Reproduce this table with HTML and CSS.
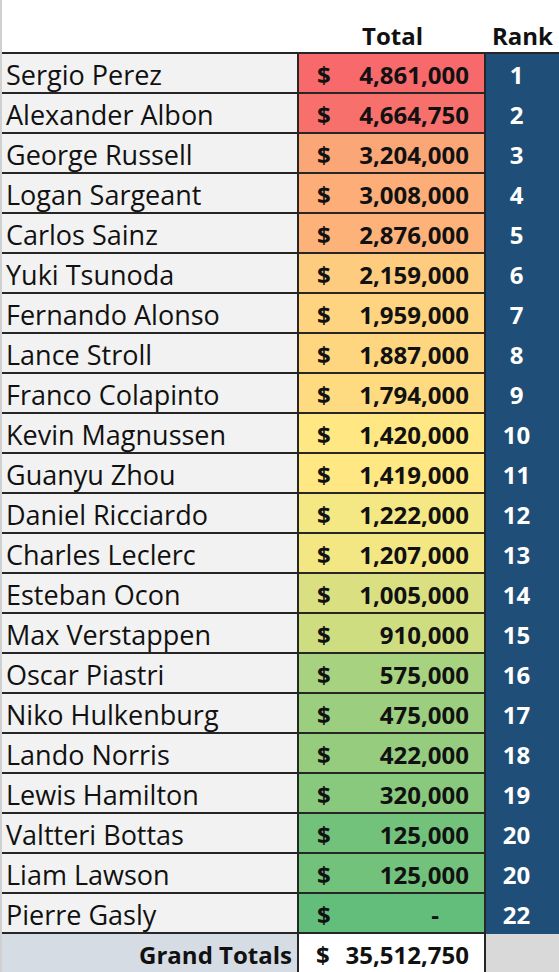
FILE: index.html
```html
<!DOCTYPE html>
<html>
<head>
<meta charset="utf-8">
<link rel="stylesheet" href="styles.css">
</head>
<body>
<div class="sheet">
  <div class="row head">
    <div class="c name"></div>
    <div class="c total">Total</div>
    <div class="c rank">Rank</div>
  </div>
  <div class="row"><div class="c name">Sergio Perez</div><div class="c total" style="background:#f8696b"><span>$</span><span>4,861,000</span></div><div class="c rank">1</div></div>
  <div class="row"><div class="c name">Alexander Albon</div><div class="c total" style="background:#f8706c"><span>$</span><span>4,664,750</span></div><div class="c rank">2</div></div>
  <div class="row"><div class="c name">George Russell</div><div class="c total" style="background:#fba677"><span>$</span><span>3,204,000</span></div><div class="c rank">3</div></div>
  <div class="row"><div class="c name">Logan Sargeant</div><div class="c total" style="background:#fcad78"><span>$</span><span>3,008,000</span></div><div class="c rank">4</div></div>
  <div class="row"><div class="c name">Carlos Sainz</div><div class="c total" style="background:#fcb279"><span>$</span><span>2,876,000</span></div><div class="c rank">5</div></div>
  <div class="row"><div class="c name">Yuki Tsunoda</div><div class="c total" style="background:#fdcc7e"><span>$</span><span>2,159,000</span></div><div class="c rank">6</div></div>
  <div class="row"><div class="c name">Fernando Alonso</div><div class="c total" style="background:#fed480"><span>$</span><span>1,959,000</span></div><div class="c rank">7</div></div>
  <div class="row"><div class="c name">Lance Stroll</div><div class="c total" style="background:#fed680"><span>$</span><span>1,887,000</span></div><div class="c rank">8</div></div>
  <div class="row"><div class="c name">Franco Colapinto</div><div class="c total" style="background:#feda81"><span>$</span><span>1,794,000</span></div><div class="c rank">9</div></div>
  <div class="row"><div class="c name">Kevin Magnussen</div><div class="c total" style="background:#ffe783"><span>$</span><span>1,420,000</span></div><div class="c rank">10</div></div>
  <div class="row"><div class="c name">Guanyu Zhou</div><div class="c total" style="background:#ffe783"><span>$</span><span>1,419,000</span></div><div class="c rank">11</div></div>
  <div class="row"><div class="c name">Daniel Ricciardo</div><div class="c total" style="background:#f3e883"><span>$</span><span>1,222,000</span></div><div class="c rank">12</div></div>
  <div class="row"><div class="c name">Charles Leclerc</div><div class="c total" style="background:#f2e783"><span>$</span><span>1,207,000</span></div><div class="c rank">13</div></div>
  <div class="row"><div class="c name">Esteban Ocon</div><div class="c total" style="background:#dae082"><span>$</span><span>1,005,000</span></div><div class="c rank">14</div></div>
  <div class="row"><div class="c name">Max Verstappen</div><div class="c total" style="background:#cfdd81"><span>$</span><span>910,000</span></div><div class="c rank">15</div></div>
  <div class="row"><div class="c name">Oscar Piastri</div><div class="c total" style="background:#a7d27f"><span>$</span><span>575,000</span></div><div class="c rank">16</div></div>
  <div class="row"><div class="c name">Niko Hulkenburg</div><div class="c total" style="background:#9bce7e"><span>$</span><span>475,000</span></div><div class="c rank">17</div></div>
  <div class="row"><div class="c name">Lando Norris</div><div class="c total" style="background:#95cc7e"><span>$</span><span>422,000</span></div><div class="c rank">18</div></div>
  <div class="row"><div class="c name">Lewis Hamilton</div><div class="c total" style="background:#89c97d"><span>$</span><span>320,000</span></div><div class="c rank">19</div></div>
  <div class="row"><div class="c name">Valtteri Bottas</div><div class="c total" style="background:#72c27c"><span>$</span><span>125,000</span></div><div class="c rank">20</div></div>
  <div class="row"><div class="c name">Liam Lawson</div><div class="c total" style="background:#72c27c"><span>$</span><span>125,000</span></div><div class="c rank">20</div></div>
  <div class="row"><div class="c name">Pierre Gasly</div><div class="c total" style="background:#63be7b"><span>$</span><span class="dash">-</span></div><div class="c rank">22</div></div>
  <div class="row grand">
    <div class="c name">Grand Totals</div>
    <div class="c total"><span>$</span><span>35,512,750</span></div>
    <div class="c rank"></div>
  </div>
</div>
</body>
</html>
```

FILE: styles.css
```css
html, body {
  margin: 0;
  padding: 0;
  background: #ffffff;
}

body {
  font-family: "Open Sans", "Noto Sans", sans-serif;
  color: #111111;
  overflow: hidden;
}

.sheet {
  width: 557px;
  border-left: 2px solid #d0d0d0;
}

.row {
  display: grid;
  grid-template-columns: 297px 187px 73px;
  height: 40px;
}

.c {
  box-sizing: border-box;
  border-bottom: 2px solid #262626;
  white-space: nowrap;
  overflow: hidden;
}

.name {
  background: #f2f2f2;
  border-right: 2px solid #262626;
  font-size: 27px;
  line-height: 35px;
  padding: 3px 0 0 4px;
}

.total {
  display: flex;
  justify-content: space-between;
  border-right: 2px solid #262626;
  font-weight: 700;
  font-size: 24px;
  line-height: 34px;
  padding: 4px 15px 0 18px;
}

.dash {
  padding-right: 30px;
}

.rank {
  background: #1f4e79;
  color: #ffffff;
  border-bottom: none;
  font-weight: 700;
  font-size: 24px;
  line-height: 34px;
  text-align: center;
  padding: 4px 12px 0 0;
}

/* header row */
.head {
  height: 54px;
}

.head .c {
  background: #ffffff;
  border-right: none;
  border-bottom: 2px solid #262626;
  color: #111111;
  display: flex;
  align-items: flex-end;
  justify-content: center;
  padding: 0;
  font-weight: 700;
  font-size: 24px;
  line-height: 32px;
}

/* grand total row */
.grand {
  height: 38px;
}

.grand .c {
  border-bottom: none;
}

.grand .name {
  background: #d6dce4;
  font-weight: 700;
  font-size: 24px;
  line-height: 34px;
  text-align: right;
  padding: 4px 5px 0 0;
}

.grand .total {
  background: #ffffff;
  padding-left: 17px;
}

.grand .rank {
  background: #d9d9d9;
}
```
